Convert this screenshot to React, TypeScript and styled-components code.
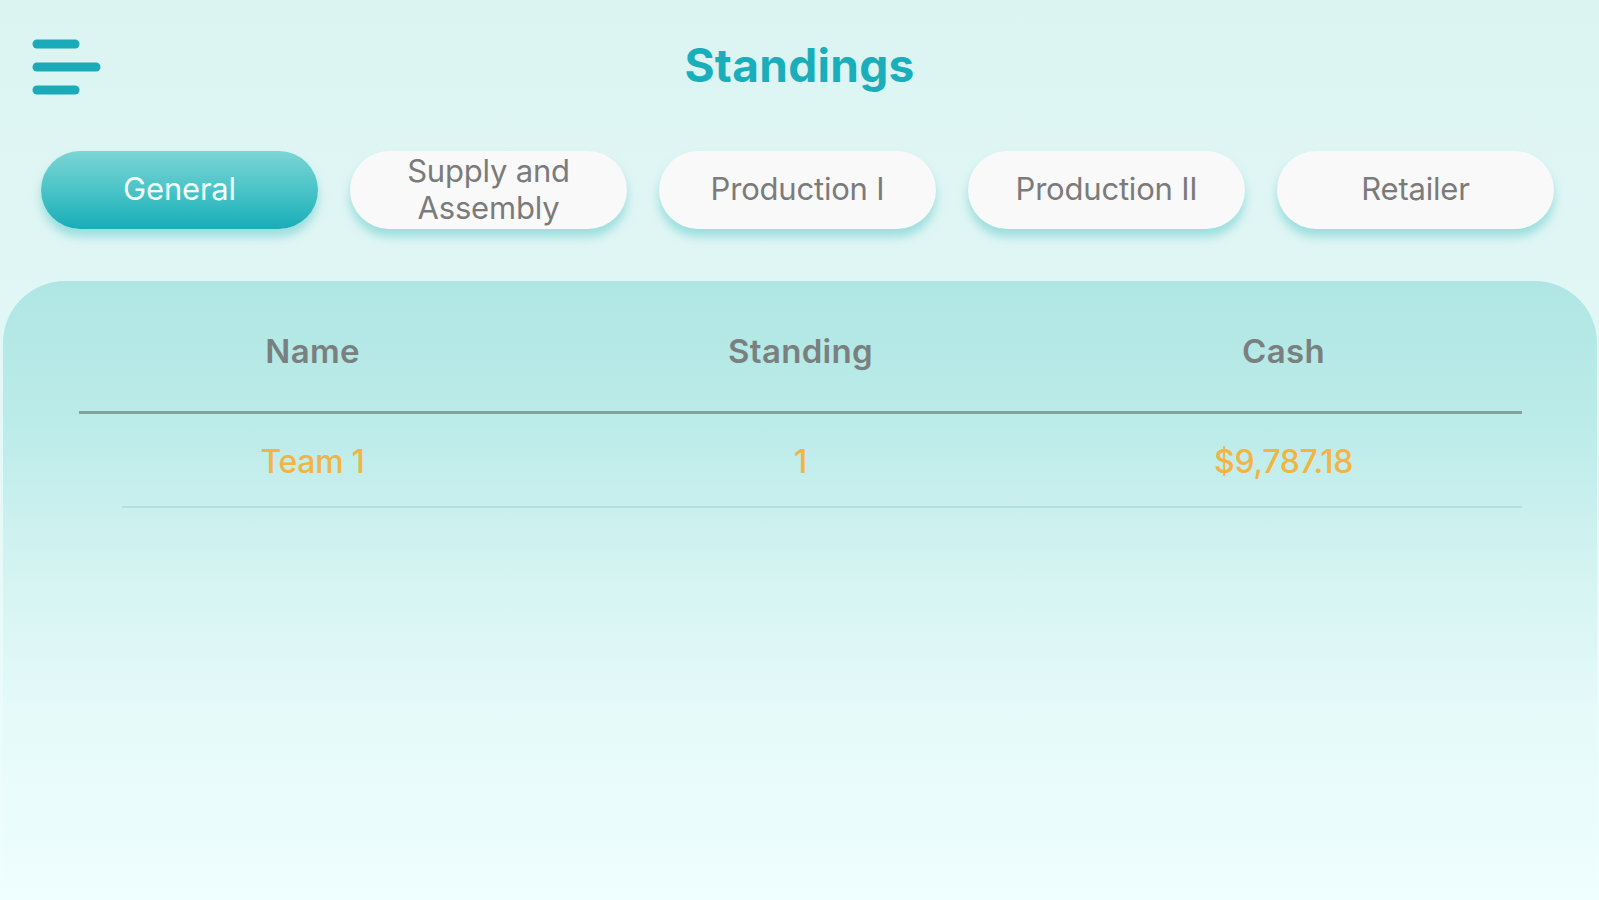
import styled, { createGlobalStyle } from "styled-components";

const GlobalStyle = createGlobalStyle`
  html, body {
    margin: 0;
    padding: 0;
  }
  body {
    min-height: 100vh;
    background: linear-gradient(180deg, #dbf4f2 0%, #e4f8f7 50%, #effefe 100%);
    font-family: "Inter", "Liberation Sans", sans-serif;
    overflow: hidden;
  }
`;

const Page = styled.div`
  height: 900px;
  display: flex;
  flex-direction: column;
`;

const Header = styled.header`
  position: relative;
  height: 130px;
  display: flex;
  align-items: center;
  justify-content: center;
`;

const MenuButton = styled.button`
  position: absolute;
  left: 29px;
  top: 35px;
  width: 76px;
  height: 64px;
  padding: 0;
  border: none;
  background: none;
  cursor: pointer;
`;

const Title = styled.h1`
  margin: 0;
  color: #1aaebb;
  font-size: 46px;
  font-weight: 700;
  letter-spacing: 0.3px;
`;

const Tabs = styled.nav`
  display: grid;
  grid-template-columns: repeat(5, 277px);
  gap: 32px;
  padding: 21px 0 0 41px;
`;

const Tab = styled.button<{ $active?: boolean }>`
  height: 78px;
  border: none;
  border-radius: 39px;
  padding: 0 20px 3px;
  font-family: inherit;
  font-size: 31px;
  line-height: 37px;
  letter-spacing: -0.2px;
  color: ${(p) => (p.$active ? "#f4ffff" : "#7b7b7b")};
  background: ${(p) =>
    p.$active
      ? "linear-gradient(180deg, #7cd5d5 0%, #45c2c6 55%, #18adb8 100%)"
      : "#f9f9f9"};
  box-shadow: 0 8px 10px rgba(112, 206, 208, 0.6);
  cursor: pointer;
`;

const Panel = styled.section`
  flex: 1;
  margin: 52px 2px 0 3px;
  border-radius: 62px 62px 0 0;
  background: linear-gradient(
    180deg,
    #afe6e3 0%,
    #bdecea 25%,
    #d2f3f1 45%,
    #e6fafa 70%,
    #effefe 100%
  );
  padding: 0 75px 0 76px;
`;

const Row = styled.div<{ $head?: boolean }>`
  display: grid;
  grid-template-columns: 1fr 1fr 1fr;
  align-items: center;
  height: ${(p) => (p.$head ? "130px" : "92px")};
  border-bottom: ${(p) => (p.$head ? "3px solid #8c9d9d" : "none")};
`;

const Cell = styled.div<{ $head?: boolean }>`
  text-align: center;
  font-size: ${(p) => (p.$head ? "33px" : "32px")};
  font-weight: ${(p) => (p.$head ? 600 : 500)};
  letter-spacing: ${(p) => (p.$head ? "0.3px" : "-0.3px")};
  color: ${(p) => (p.$head ? "#7a7f80" : "#f2b444")};
  padding-top: ${(p) => (p.$head ? "10px" : "2px")};
  &:first-child {
    padding-right: 14px;
  }
  &:last-child {
    padding-left: 4px;
  }
`;

const Separator = styled.div`
  height: 2px;
  margin-left: 43px;
  background: #b4e0db;
`;

const tabs = ["General", "Supply and Assembly", "Production I", "Production II", "Retailer"];

function MenuIcon() {
  return (
    <svg width="76" height="64" viewBox="0 0 76 64">
      <g stroke="#1aaab8" strokeWidth="9" strokeLinecap="round">
        <line x1="8" y1="9" x2="46" y2="9" />
        <line x1="8" y1="32" x2="67" y2="32" />
        <line x1="8" y1="55" x2="46" y2="55" />
      </g>
    </svg>
  );
}

export default function App() {
  return (
    <>
      <GlobalStyle />
      <Page>
        <Header>
          <MenuButton aria-label="Menu">
            <MenuIcon />
          </MenuButton>
          <Title>Standings</Title>
        </Header>
        <Tabs>
          {tabs.map((t, i) => (
            <Tab key={t} $active={i === 0}>
              {t === "Supply and Assembly" ? (
                <>
                  Supply and
                  <br />
                  Assembly
                </>
              ) : (
                t
              )}
            </Tab>
          ))}
        </Tabs>
        <Panel>
          <Row $head>
            <Cell $head>Name</Cell>
            <Cell $head>Standing</Cell>
            <Cell $head>Cash</Cell>
          </Row>
          <Row>
            <Cell>Team 1</Cell>
            <Cell>1</Cell>
            <Cell>$9,787.18</Cell>
          </Row>
          <Separator />
        </Panel>
      </Page>
    </>
  );
}
